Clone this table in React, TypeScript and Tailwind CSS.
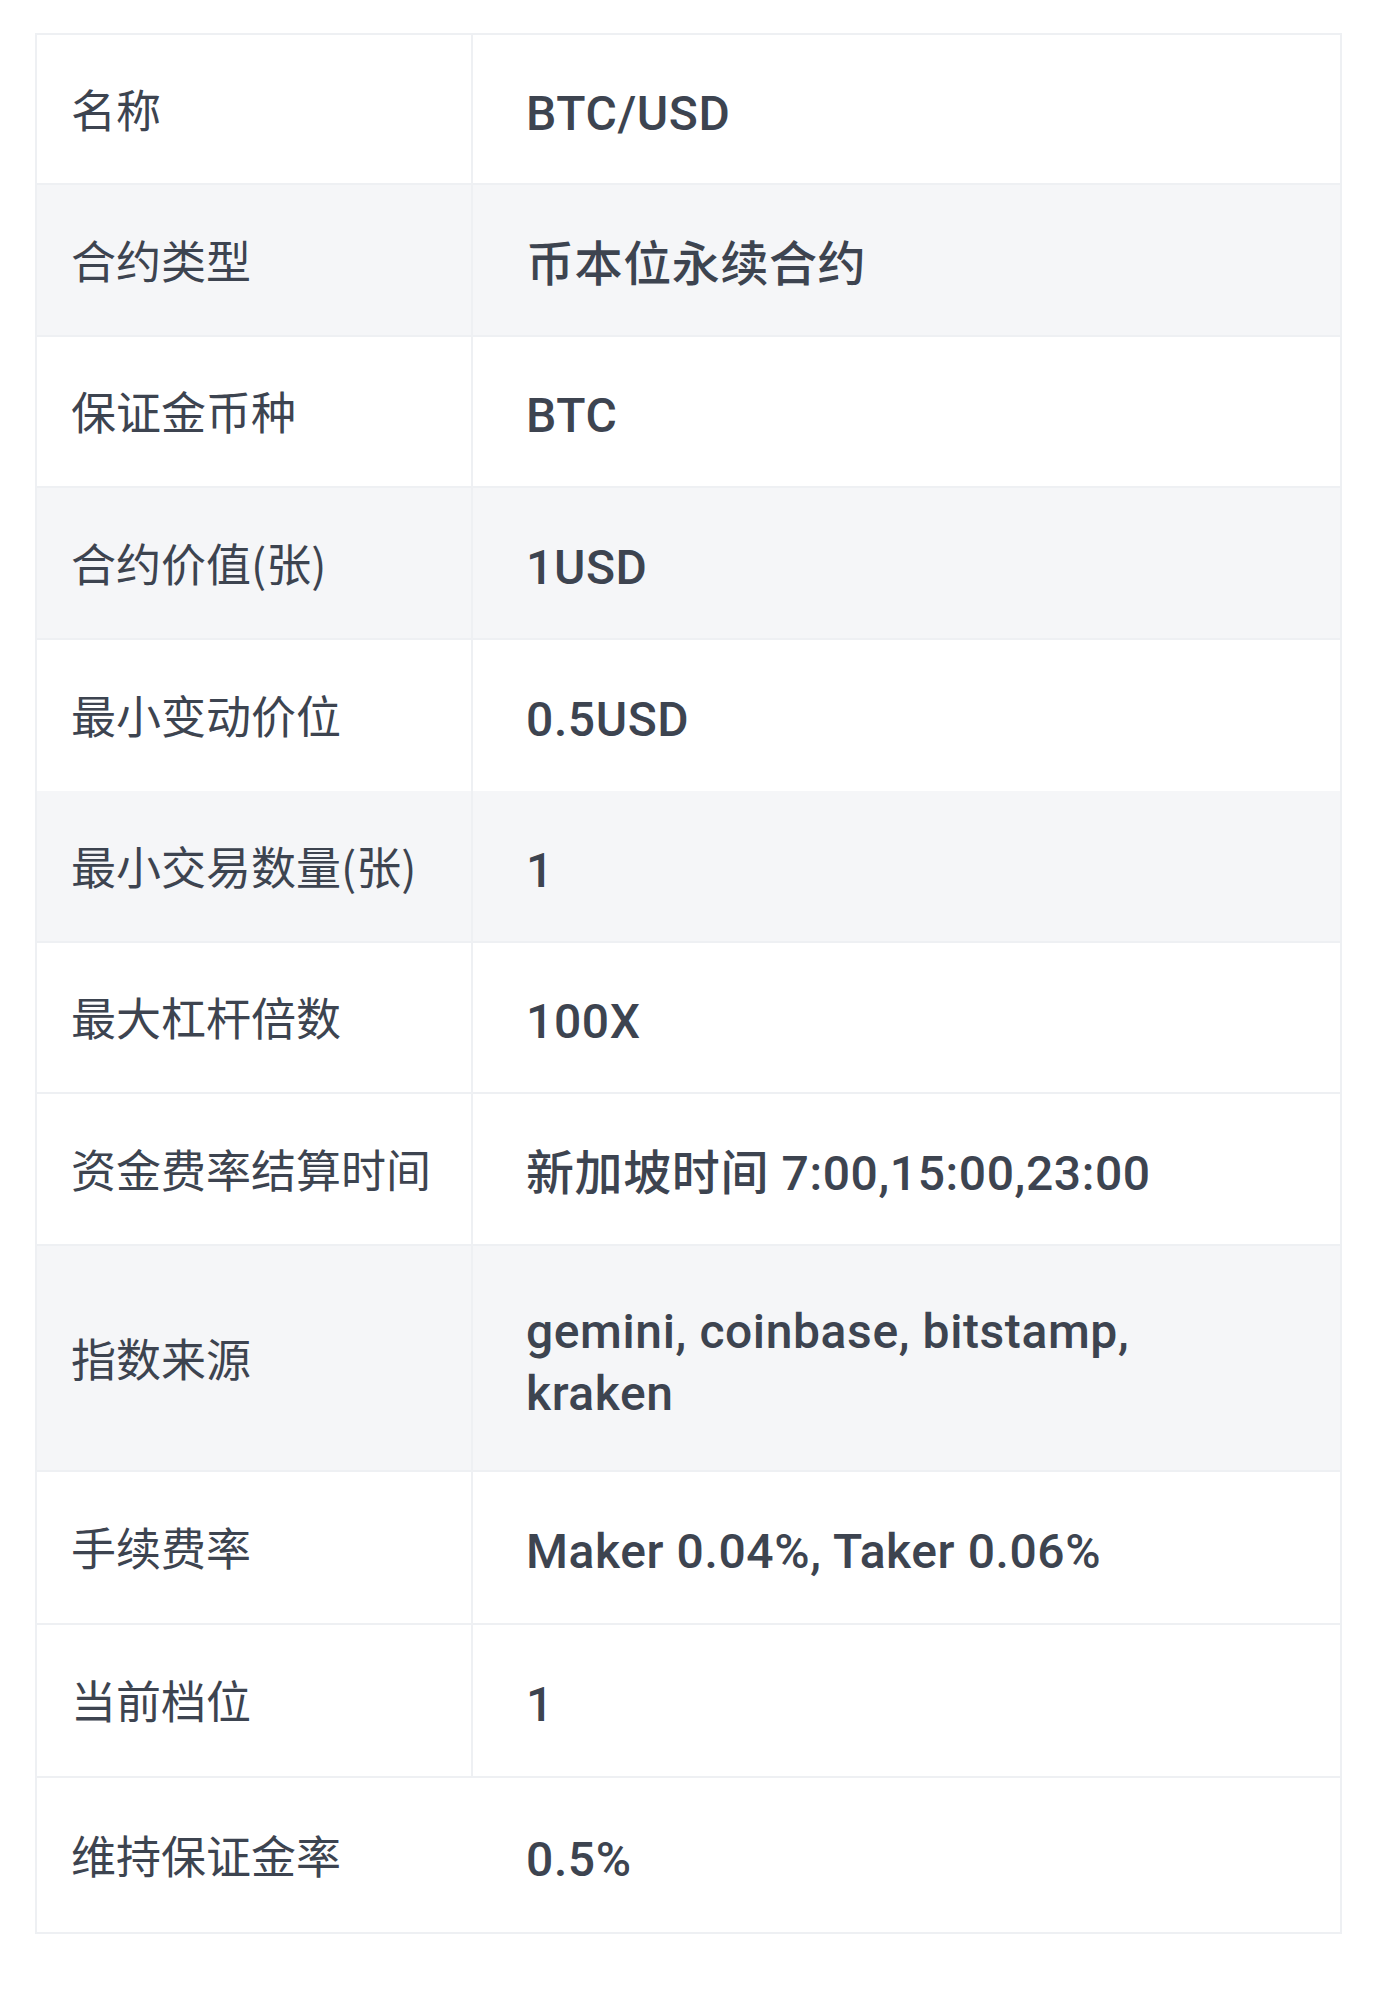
type Row = {
  label: string;
  value: string[];
  shade?: boolean;
  h: string;
  noBottom?: boolean;
  noDivider?: boolean;
};

const rows: Row[] = [
  { label: '名称', value: ['BTC/USD'], h: 'h-[150px]' },
  { label: '合约类型', value: ['币本位永续合约'], shade: true, h: 'h-[151.5px]' },
  { label: '保证金币种', value: ['BTC'], h: 'h-[151.5px]' },
  { label: '合约价值(张)', value: ['1USD'], shade: true, h: 'h-[151.5px]' },
  { label: '最小变动价位', value: ['0.5USD'], h: 'h-[151.5px]', noBottom: true },
  { label: '最小交易数量(张)', value: ['1'], shade: true, h: 'h-[151.5px]' },
  { label: '最大杠杆倍数', value: ['100X'], h: 'h-[151.5px]' },
  { label: '资金费率结算时间', value: ['新加坡时间 7:00,15:00,23:00'], h: 'h-[151.5px]' },
  { label: '指数来源', value: ['gemini, coinbase, bitstamp,', 'kraken'], shade: true, h: 'h-[226px]' },
  { label: '手续费率', value: ['Maker 0.04%, Taker 0.06%'], h: 'h-[153px]' },
  { label: '当前档位', value: ['1'], h: 'h-[153px]' },
  { label: '维持保证金率', value: ['0.5%'], h: 'h-[154px]', noBottom: true, noDivider: true },
];

function SpecRow({ row }: { row: Row }) {
  return (
    <div
      className={`flex ${row.h} ${row.shade ? 'bg-[#f5f6f8]' : 'bg-white'} ${
        row.noBottom ? '' : 'border-b-2 border-[#eef0f3]'
      }`}
    >
      <div className="w-[434px] shrink-0 flex items-center pl-[34px] text-[45px] leading-[60px] text-[#3d4450] font-['Noto_Sans_CJK_SC',sans-serif]">
        {row.label}
      </div>
      <div
        className={`flex-1 flex flex-col justify-center pl-[53px] pt-[10px] text-[48px] leading-[62px] font-medium tracking-[0.6px] text-[#3d4450] font-['Roboto','Noto_Sans_CJK_SC',sans-serif] ${
          row.noDivider ? 'border-l-2 border-transparent' : 'border-l-2 border-[#eef0f3]'
        }`}
      >
        {row.value.map((line) => (
          <div key={line}>{line}</div>
        ))}
      </div>
    </div>
  );
}

export default function App() {
  return (
    <div className="min-h-[1992px] w-[1384px] bg-white pt-[33px] pl-[35px]">
      <div className="w-[1307px] border-2 border-[#eef0f3]">
        {rows.map((row) => (
          <SpecRow key={row.label} row={row} />
        ))}
      </div>
    </div>
  );
}
